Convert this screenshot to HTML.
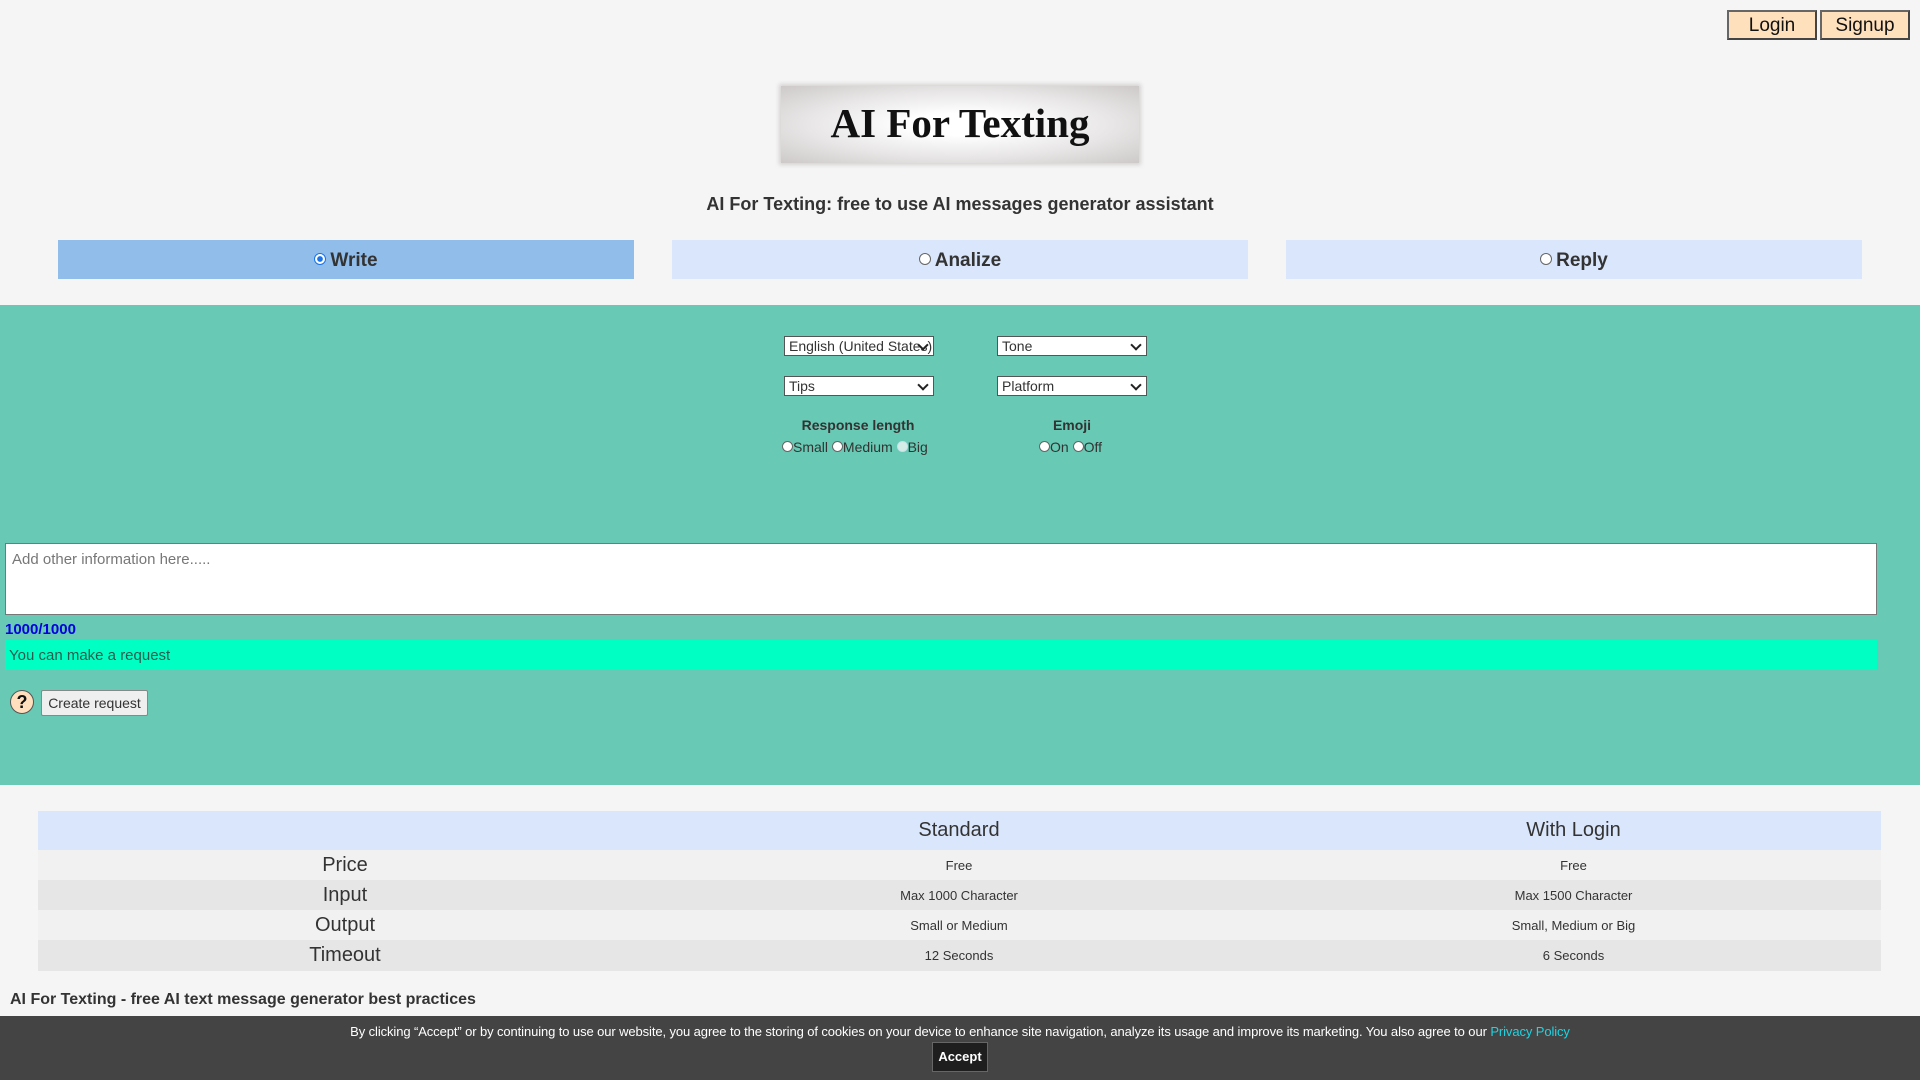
<!DOCTYPE html>
<html><head><meta charset="utf-8"><style>
*{box-sizing:border-box;margin:0;padding:0}
body{width:1920px;height:1080px;overflow:hidden;background:#f5f5f5;font-family:"Liberation Sans",Arial,sans-serif;color:#333;position:relative}
.a{position:absolute}
.btn{background:#ffe0bd;border:2px solid #444;border-top-color:#666;border-left-color:#666;font-size:19px;color:#111;text-align:center;line-height:28px;height:30px;top:10px}
.logo{left:781px;top:86px;width:358px;height:77px;background:radial-gradient(ellipse at center,#fff 20%,#e8e6e6 60%,#cdc9c9 100%);box-shadow:0 0 4px 2px #d6d2d2;font-family:"Liberation Serif",serif;font-weight:bold;font-size:41px;color:#111;text-align:center;line-height:74px}
.tab{top:240px;height:39px;font-size:19px;font-weight:bold;text-align:center;line-height:41px;color:#333}
.rad{display:inline-block;width:12px;height:12px;border:1px solid #666;border-radius:50%;background:#fff;vertical-align:1px;margin-right:4px}
.green{left:0;top:305px;width:1920px;height:480px;background:#68c9b4}
.sel{height:20px;border:1px solid #555;background:#fff;font-size:14px;line-height:19px;padding-left:4px;color:#333}
.sel:after{content:"";position:absolute;right:6px;top:4px;width:6px;height:6px;border-right:2px solid #222;border-bottom:2px solid #222;transform:rotate(45deg);background:#fff}
.lbl{font-size:14px;font-weight:bold;color:#333;text-align:center}
.r2{font-size:14px;color:#333}
.r2 .rad{width:11px;height:11px;margin-right:0;vertical-align:0}
table{border-collapse:collapse}
.tb{left:38px;top:811px;width:1843px}
.tb td{text-align:center;font-size:13px;color:#333}
.tb td:first-child{font-size:20px;width:614px}
</style></head><body>
<div class="a btn" style="left:1727px;width:90px">Login</div>
<div class="a btn" style="left:1820px;width:90px">Signup</div>
<div class="a logo">AI For Texting</div>
<div class="a" style="left:0;width:1920px;top:194px;text-align:center;font-size:18px;font-weight:bold;color:#333">AI For Texting: free to use AI messages generator assistant</div>
<div class="a tab" style="left:58px;width:576px;background:#90bde9"><span class="rad" style="border-color:#1a73e8;background:radial-gradient(circle,#1a73e8 35%,#fff 45%)"></span>Write</div>
<div class="a tab" style="left:672px;width:576px;background:#dae6fb"><span class="rad"></span>Analize</div>
<div class="a tab" style="left:1286px;width:576px;background:#dae6fb"><span class="rad"></span>Reply</div>
<div class="a green"></div>
<div class="a sel" style="left:784px;top:336px;width:150px;overflow:hidden;white-space:nowrap;padding-right:16px">English (United States)</div>
<div class="a sel" style="left:997px;top:336px;width:150px">Tone</div>
<div class="a sel" style="left:784px;top:376px;width:150px">Tips</div>
<div class="a sel" style="left:997px;top:376px;width:150px">Platform</div>
<div class="a lbl" style="left:758px;width:200px;top:417px">Response length</div>
<div class="a lbl" style="left:972px;width:200px;top:417px">Emoji</div>
<div class="a r2" style="left:782px;top:439px"><span class="rad"></span>Small <span class="rad"></span>Medium <span class="rad" style="border-color:#cde;background:#d4ece6"></span>Big</div>
<div class="a r2" style="left:1039px;top:439px"><span class="rad"></span>On <span class="rad"></span>Off</div>
<div class="a" style="left:5px;top:543px;width:1872px;height:72px;background:#fff;border:1px solid #777;font-size:15px;color:#777;padding:7px 6px">Add other information here.....</div>
<div class="a" style="left:5px;top:621px;font-size:15px;font-weight:bold;color:#0000e0">1000/1000</div>
<div class="a" style="left:5px;top:640px;width:1872px;height:30px;background:#00ffc3;font-size:15px;color:#2a5c50;line-height:32px;padding-left:4px">You can make a request</div>
<div class="a" style="left:10px;top:690px;width:24px;height:24px;border-radius:50%;background:#ffdfbd;border:1px solid #555;text-align:center;font-weight:bold;font-size:18px;line-height:22px;color:#111">?</div>
<div class="a" style="left:41px;top:690px;width:107px;height:26px;background:#efefef;border:1px solid #888;border-radius:2px;font-size:14px;text-align:center;line-height:24px;color:#333">Create request</div>
<table class="a tb">
<tr style="background:#dae6fb;height:39px"><td></td><td style="font-size:20px;width:614px">Standard</td><td style="font-size:20px">With Login</td></tr>
<tr style="background:#f1f1f1;height:30px"><td>Price</td><td>Free</td><td>Free</td></tr>
<tr style="background:#e6e6e6;height:30px"><td>Input</td><td>Max 1000 Character</td><td>Max 1500 Character</td></tr>
<tr style="background:#f1f1f1;height:30px"><td>Output</td><td>Small or Medium</td><td>Small, Medium or Big</td></tr>
<tr style="background:#e6e6e6;height:31px"><td>Timeout</td><td>12 Seconds</td><td>6 Seconds</td></tr>
</table>
<div class="a" style="left:10px;top:991px;font-size:16px;font-weight:bold;color:#333">AI For Texting - free AI text message generator best practices</div>
<div class="a" style="left:0;top:1016px;width:1920px;height:64px;background:#444"></div>
<div class="a" style="left:0;width:1920px;top:1024px;text-align:center;font-size:13px;color:#fff;letter-spacing:-0.1px">By clicking “Accept” or by continuing to use our website, you agree to the storing of cookies on your device to enhance site navigation, analyze its usage and improve its marketing. You also agree to our <span style="color:#1fd3e0">Privacy Policy</span></div>
<div class="a" style="left:932px;top:1042px;width:56px;height:30px;background:#1e1e1e;border:1px solid #666;color:#fff;font-size:13px;font-weight:bold;text-align:center;line-height:28px">Accept</div>
</body></html>
